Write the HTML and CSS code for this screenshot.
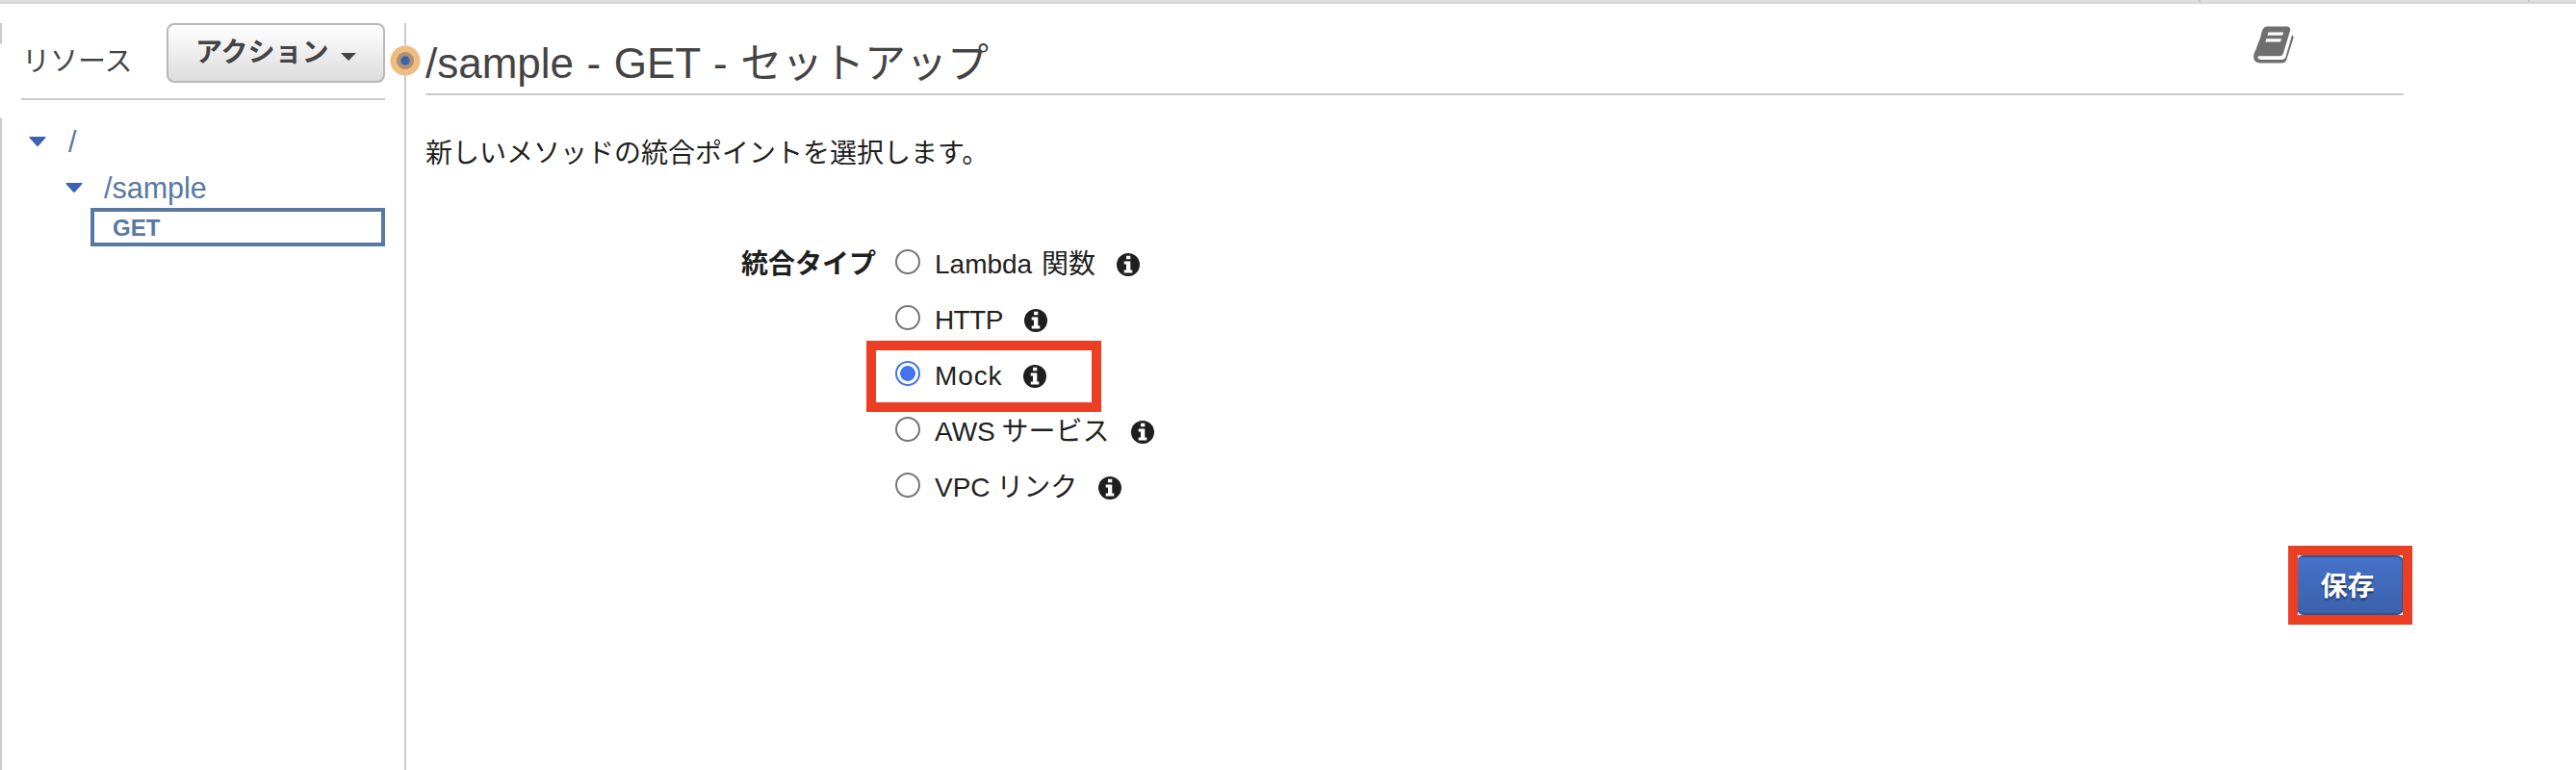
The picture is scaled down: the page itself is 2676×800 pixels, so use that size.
FILE: index.html
```html
<!DOCTYPE html>
<html lang="ja">
<head>
<meta charset="utf-8">
<title>/sample - GET - セットアップ</title>
<link rel="stylesheet" href="styles.css">
</head>
<body>
<svg class="defs" width="0" height="0">
  <symbol id="info" viewBox="0 0 24 24">
    <circle cx="12" cy="12" r="12" fill="#1f1f1f"/>
    <path d="M10 2.700h4.300v3.500H10zM7.700 8.500h6.600v9h2v2.900H7.700v-2.900H10v-6H7.700z" fill="#fff"/>
  </symbol>
</svg>
<div class="topbar"></div>
<div class="layout">
  <div class="edge"><i class="edge-top"></i><i class="edge-rest"></i></div>
  <aside class="sidebar">
    <div class="side-head">
      <span class="side-title">リソース</span>
      <button class="action">アクション<svg width="16" height="8" viewBox="0 0 16 8"><path d="M0 0h16L8 8z" fill="#444"/></svg></button>
    </div>
    <div class="tree">
      <div class="node root"><svg width="18" height="10" viewBox="0 0 18 10"><path d="M1 0h16q1 0 .5 1L10 9.500q-1 .8-2 0L.5 1Q0 0 1 0z" fill="#3c63b0"/></svg><span>/</span></div>
      <div class="node child"><svg width="18" height="10" viewBox="0 0 18 10"><path d="M1 0h16q1 0 .5 1L10 9.500q-1 .8-2 0L.5 1Q0 0 1 0z" fill="#3c63b0"/></svg><span>/sample</span></div>
      <div class="method">GET</div>
    </div>
  </aside>
  <div class="divider"><svg class="handle" width="32" height="32" viewBox="0 0 32 32"><circle cx="16" cy="16" r="15.500" fill="#edbd82"/><circle cx="16" cy="16" r="9" fill="#b08f70"/><circle cx="16" cy="16" r="4.700" fill="#3c63b0"/></svg></div>
  <main class="main">
    <header class="head">
      <h1>/sample - GET - <span class="kana">セットアップ</span></h1>
      <svg class="book" width="42" height="40" viewBox="0 0 42 40"><path d="M13.500.5H35q4 .5 3 4.500L31 28q-1 3.300-4 3.300H6q-2 0-1.600 1.600.6 2.100 3.600 2.100h22q2.500 0 3.400-2.700L40 9.500q2 .5 1.500 3L34.500 34.500q-1.200 4-5 4H7Q.5 38.500 0 32q0-2 1-4.500Q3 24 4 20L7.500 11Q8.500 5 10 3q1.300-2.400 3.500-2.500z" fill="#6f6f6f"/><path d="M15.500 6.500H31l-.9 3.300H14.400zM13.400 13.200H29l-.9 3.200H12.300z" fill="#fff"/></svg>
    </header>
    <p class="intro">新しいメソッドの統合ポイントを選択します。</p>
    <div class="form">
      <div class="label">統合タイプ</div>
      <div class="options">
        <label class="option lambda"><i class="radio"></i><span>Lambda 関数</span><svg class="info"><use href="#info"/></svg></label>
        <label class="option http"><i class="radio"></i><span>HTTP</span><svg class="info"><use href="#info"/></svg></label>
        <label class="option marked"><i class="radio checked"></i><span>Mock</span><svg class="info"><use href="#info"/></svg></label>
        <label class="option tight"><i class="radio"></i><span>AWS サービス</span><svg class="info"><use href="#info"/></svg></label>
        <label class="option tight"><i class="radio"></i><span>VPC リンク</span><svg class="info"><use href="#info"/></svg></label>
      </div>
    </div>
    <div class="actions"><div class="save-wrap"><button class="save">保存</button></div></div>
  </main>
</div>
</body>
</html>
```
FILE: styles.css
```css
*, *::after { box-sizing: border-box; }
body {
  margin: 0;
  height: 800px;
  overflow: hidden;
  background: #fff;
  color: #1f1f1f;
  font: 28px/40px "Liberation Sans", "Noto Sans CJK JP", sans-serif;
}
.defs { position: absolute; }
.topbar {
  height: 4px;
  background:
    linear-gradient(#c6c6c6, #c6c6c6) 2284px 0 / 2px 2px no-repeat,
    linear-gradient(#c6c6c6, #c6c6c6) 2626px 0 / 2px 2px no-repeat,
    #e0e0e0;
  border-bottom: 2px solid #d6d6d6;
}
.layout { display: flex; height: 796px; padding-top: 20px; }
.edge { width: 2px; display: flex; flex-direction: column; gap: 76px; }
.edge i { display: block; background: #cbcbcb; }
.edge-top { height: 22px; border-bottom-right-radius: 2px; }
.edge-rest { flex: 1; border-top-right-radius: 2px; }
.sidebar { width: 398px; padding-left: 20px; }
.side-head {
  display: flex;
  justify-content: space-between;
  height: 80px;
  border-bottom: 2px solid #cbcbcb;
}
.side-title { padding: 20px 0 0 1px; color: #444; font-size: 29px; }
.action {
  display: flex;
  align-items: center;
  gap: 12px;
  width: 227px;
  height: 62px;
  padding: 0 0 0 28px;
  border: 2px solid #b8b8b8;
  border-radius: 8px;
  background: linear-gradient(#fff, #dcdcdc);
  color: #444;
  font: bold 28px/40px "Liberation Sans", "Noto Sans CJK JP", sans-serif;
}
.action svg { margin-top: 7px; }
.tree { padding-top: 18px; color: #5878a4; font-size: 30.5px; }
.node { display: flex; align-items: center; height: 48px; }
.node span { padding-top: 2px; }
.node svg { margin-top: 2px; }
.root { padding-left: 8px; gap: 23px; }
.child { padding-left: 46px; gap: 22px; }
.method {
  margin: -2px 0 0 72px;
  height: 40px;
  padding-left: 19px;
  border: 4px solid #5878a4;
  font: bold 24px/33px "Liberation Sans", sans-serif;
}
.divider { position: relative; width: 2px; margin-left: 20px; background: #cbcbcb; }
.handle { position: absolute; left: -15px; top: 23px; }
.main { width: 2055px; margin-left: 20px; }
.head {
  display: flex;
  justify-content: space-between;
  height: 75px;
  padding-right: 114px;
  border-bottom: 2px solid #cbcbcb;
}
h1 { margin: 0; padding-top: 12px; color: #444; font-size: 44px; line-height: 60px; font-weight: normal; word-spacing: 1.3px; }
.kana { font-size: 43px; }
.book { margin-top: 3px; }
.intro { margin: 0; padding-top: 41px; }
.form { display: flex; padding: 66px 0 0 328px; }
.label { width: 160px; line-height: 58px; font-weight: bold; }
.option {
  position: relative;
  display: flex;
  align-items: center;
  height: 58px;
  width: 300px;
  word-spacing: 1px;
}
.radio {
  width: 26px;
  height: 26px;
  margin: 0 15px 6px 0;
  border: 2px solid #757575;
  border-radius: 50%;
}
.checked { border-color: #4374f0; background: radial-gradient(circle, #4374f0 7.500px, #fff 8.200px); }
.info { width: 24px; height: 24px; margin-left: 21px; }
.lambda { word-spacing: 2px; }
.lambda .info { margin-left: 22px; }
.tight { word-spacing: -1px; }
.tight .info { margin-left: 22px; }
.http { letter-spacing: -.6px; }
.http .info { margin-left: 22px; }
.marked { letter-spacing: .9px; }
.marked::after {
  content: "";
  position: absolute;
  left: -30px;
  top: -8px;
  width: 244px;
  height: 74px;
  border: 10px solid #eb3f25;
}
.actions { display: flex; justify-content: flex-end; padding-top: 41px; }
.save-wrap { position: relative; }
.save-wrap::after {
  content: "";
  position: absolute;
  inset: -10px -9px;
  border: 10px solid #eb3f25;
}
.save {
  display: block;
  width: 111px;
  height: 62px;
  padding: 0 4px 3px 0;
  border: 2px solid #2d5595;
  border-left-width: 0;
  border-radius: 7px;
  background: linear-gradient(#4572c9, #3b62ab);
  color: #fff;
  font: bold 28px/40px "Noto Sans CJK JP", sans-serif;
  text-shadow: 0 2px 2px #1c335f;
}
```
